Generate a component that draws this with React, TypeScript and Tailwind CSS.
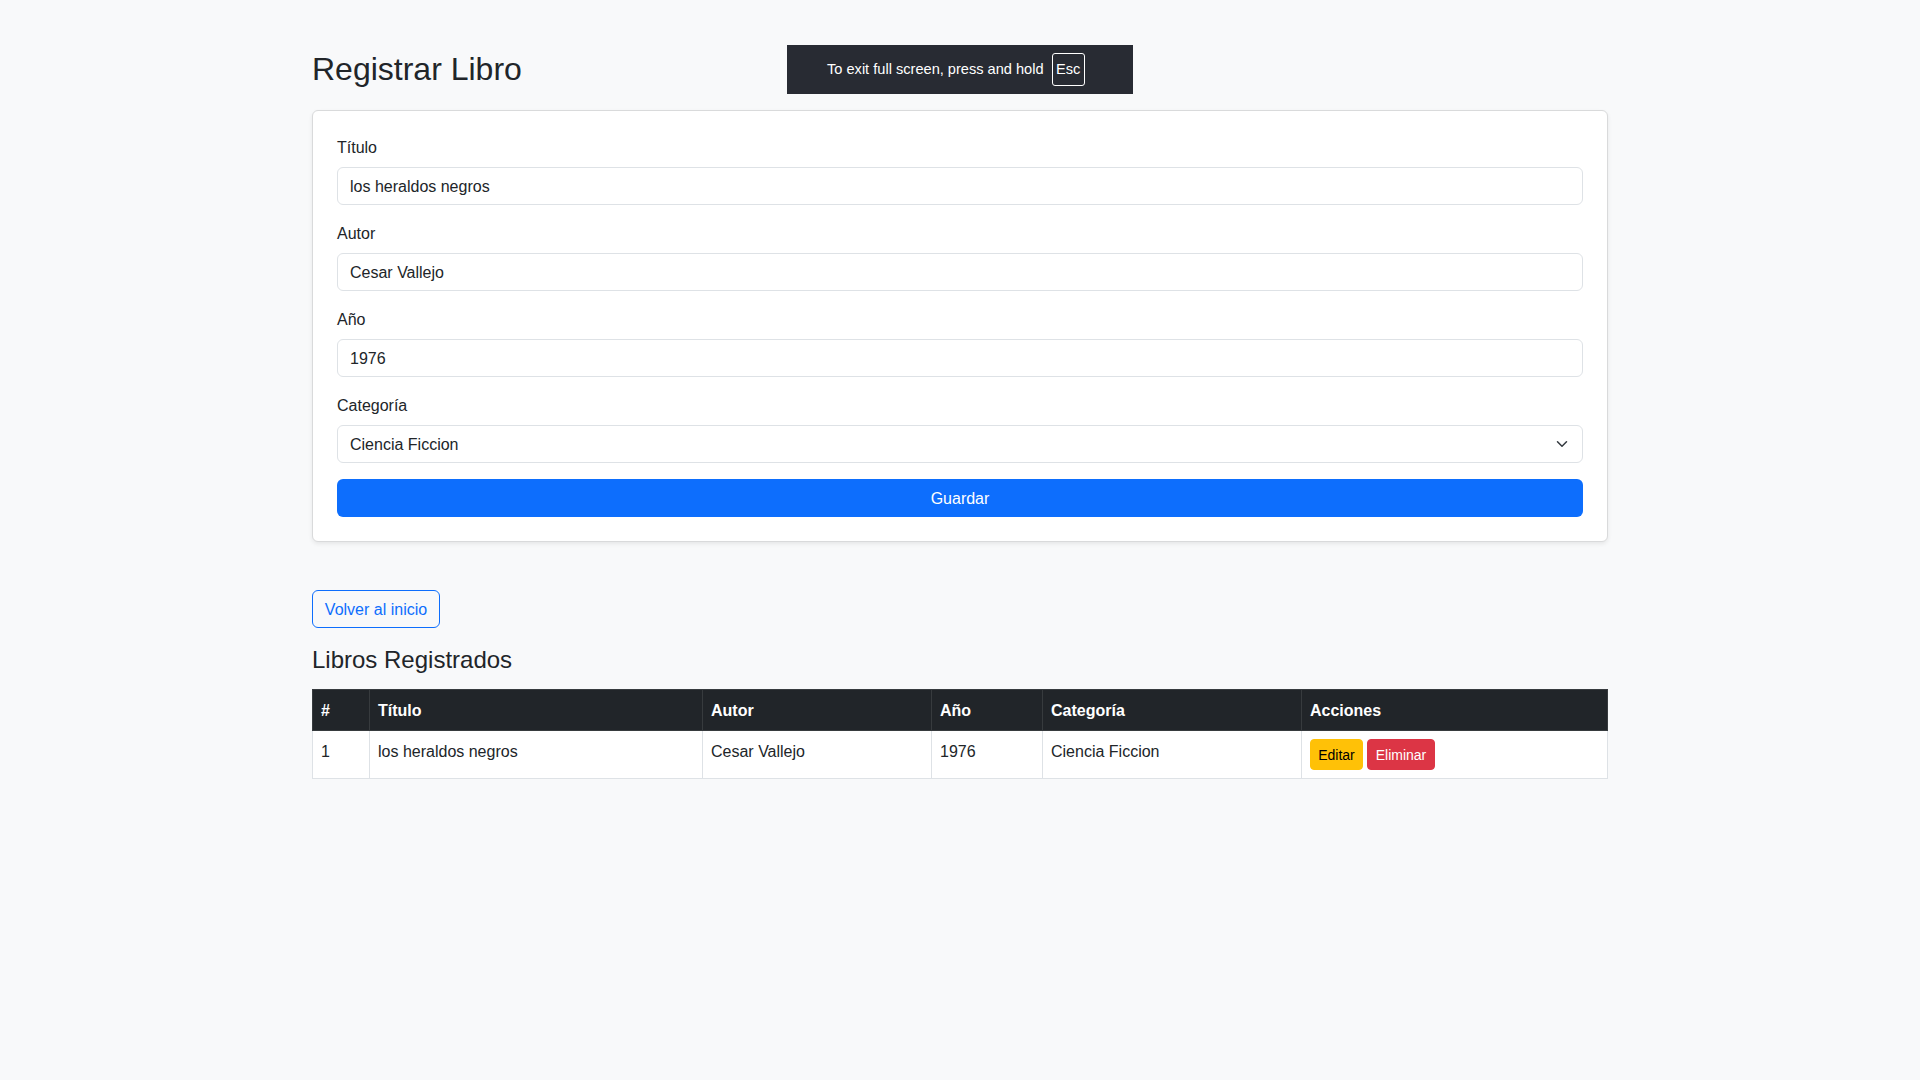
import React from "react";

const fontStack = "font-['Liberation_Sans','Helvetica',Arial,sans-serif]";
const labelCls = "block h-6 pt-[2px] leading-[22px] mb-2 text-base";

function Field({ label, value }: { label: string; value: string }) {
  return (
    <div className="mb-4">
      <label className={labelCls}>{label}</label>
      <input
        readOnly
        defaultValue={value}
        className="block w-full h-[38px] px-3 pt-[7px] pb-[5px] text-base leading-6 text-[#212529] bg-white border border-[#dee2e6] rounded-md outline-none"
      />
    </div>
  );
}

export default function App() {
  const cols = [
    { name: "#", w: "w-[57px]" },
    { name: "Título", w: "w-[333px]" },
    { name: "Autor", w: "w-[229px]" },
    { name: "Año", w: "w-[111px]" },
    { name: "Categoría", w: "w-[259px]" },
    { name: "Acciones", w: "" },
  ];

  const td = "px-2 pt-[9px] pb-[7px] border border-[#dee2e6] align-top";

  return (
    <div className={`min-h-screen bg-[#f8f9fa] text-[#212529] ${fontStack}`}>
      <div className="mx-auto w-[1320px] px-3 pt-[50px] pb-12">
        <h2 className="text-[32px] font-medium leading-[38.4px] mb-[22px]">Registrar Libro</h2>

        <div className="bg-white border border-[#d9dadb] rounded-md shadow-[0_2px_4px_rgba(0,0,0,0.075)] p-6">
          <Field label="Título" value="los heraldos negros" />
          <Field label="Autor" value="Cesar Vallejo" />
          <Field label="Año" value="1976" />
          <div className="mb-4">
            <label className={labelCls}>Categoría</label>
            <div className="flex items-center justify-between w-full h-[38px] pl-3 pr-3 text-base leading-6 bg-white border border-[#dee2e6] rounded-md">
              <span className="pt-[2px]">Ciencia Ficcion</span>
              <svg width="16" height="12" viewBox="0 0 16 16" fill="none">
                <path d="M2 5l6 6 6-6" stroke="#343a40" strokeWidth="2" strokeLinecap="round" strokeLinejoin="round" />
              </svg>
            </div>
          </div>
          <button className="block w-full h-[38px] bg-[#0d6efd] text-white text-base leading-6 pt-[2px] rounded-md">
            Guardar
          </button>
        </div>

        <button className="mt-12 h-[38px] w-[128px] border border-[#0d6efd] text-[#0d6efd] text-base leading-6 pt-[2px] rounded-md bg-transparent">
          Volver al inicio
        </button>

        <h4 className="mt-[18px] mb-[14px] text-[24px] font-medium leading-[28.8px]">Libros Registrados</h4>

        <table className="w-full table-fixed border-collapse text-base leading-6">
          <colgroup>
            {cols.map((c) => (
              <col key={c.name} className={c.w} />
            ))}
          </colgroup>
          <thead>
            <tr>
              {cols.map((c) => (
                <th
                  key={c.name}
                  className="bg-[#212529] text-white font-bold text-left px-2 pt-[9px] pb-[7px] border border-[#373b3e] align-top"
                >
                  {c.name}
                </th>
              ))}
            </tr>
          </thead>
          <tbody>
            <tr className="bg-white">
              <td className={td}>1</td>
              <td className={td}>los heraldos negros</td>
              <td className={td}>Cesar Vallejo</td>
              <td className={td}>1976</td>
              <td className={td}>Ciencia Ficcion</td>
              <td className="px-2 py-2 border border-[#dee2e6] align-top">
                <div className="flex gap-[4px]">
                  <button className="h-[31px] w-[53px] bg-[#ffc107] border border-[#ffc107] text-black text-sm pt-px rounded">
                    Editar
                  </button>
                  <button className="h-[31px] w-[68px] bg-[#dc3545] border border-[#dc3545] text-white text-sm pt-px rounded">
                    Eliminar
                  </button>
                </div>
              </td>
            </tr>
          </tbody>
        </table>
      </div>

      <div className="fixed top-[45px] left-[787px] w-[346px] h-[49px] bg-[#282b33] text-white text-[14.6px] flex items-center pl-[40px] gap-2">
        <span className="pt-px">To exit full screen, press and hold</span>
        <span className="w-[33px] h-[33px] border border-white rounded-[3px] flex items-center justify-center pt-px">Esc</span>
      </div>
    </div>
  );
}
